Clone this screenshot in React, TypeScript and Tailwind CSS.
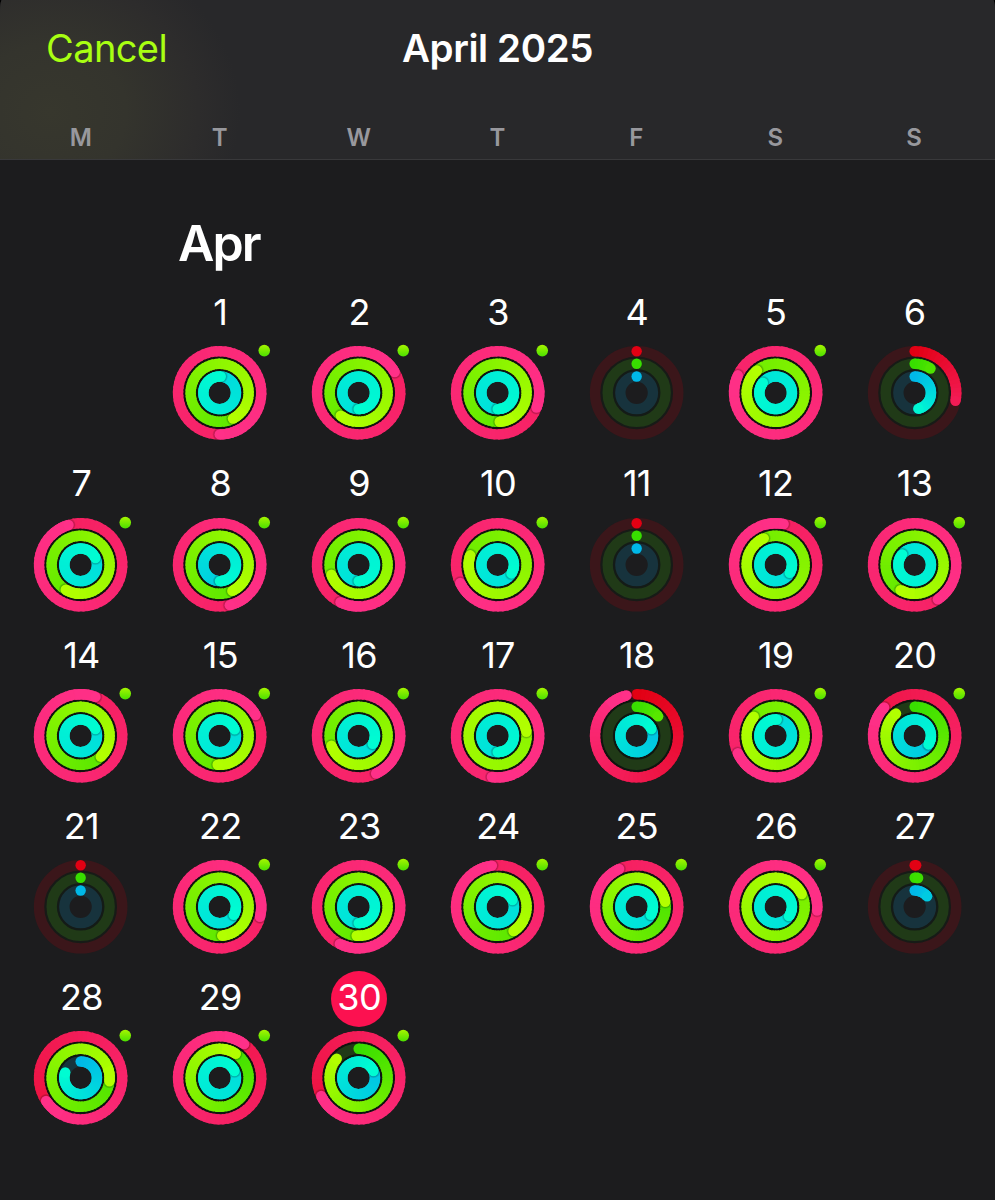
import React from 'react';

type Rings = [number, number, number];

type Day = {
  day: number;
  // move, exercise, stand (1 = goal reached)
  rings: Rings;
  workout?: boolean;
};

const weekdays = ['M', 'T', 'W', 'T', 'F', 'S', 'S'];

const days: Day[] = [
  { day: 1, rings: [3.5, 1.424, 2.011], workout: true },
  { day: 2, rings: [3.167, 1.606, 2.5], workout: true },
  { day: 3, rings: [3.308, 1.489, 2.5], workout: true },
  { day: 4, rings: [0, 0, 0] },
  { day: 5, rings: [3.819, 1.889, 2.856], workout: true },
  { day: 6, rings: [0.281, 0.092, 0.464] },
  { day: 7, rings: [2.953, 1.586, 2.181], workout: true },
  { day: 8, rings: [3.461, 1.428, 1.497], workout: true },
  { day: 9, rings: [3.572, 1.694, 2.5], workout: true },
  { day: 10, rings: [3.678, 1.803, 2.339], workout: true },
  { day: 11, rings: [0, 0, 0] },
  { day: 12, rings: [3.031, 1.933, 2.333], workout: true },
  { day: 13, rings: [3.406, 1.581, 2.861], workout: true },
  { day: 14, rings: [3.058, 1.378, 2.181], workout: true },
  { day: 15, rings: [3.167, 1.511, 2.186], workout: true },
  { day: 16, rings: [3.431, 1.694, 2.333], workout: true },
  { day: 17, rings: [4.522, 3.228, 2.5], workout: true },
  { day: 18, rings: [0.961, 0.133, 1.181] },
  { day: 19, rings: [3.681, 1.864, 2.011], workout: true },
  { day: 20, rings: [1.869, 0.889, 1.339], workout: true },
  { day: 21, rings: [0, 0, 0] },
  { day: 22, rings: [3.289, 1.486, 2.333], workout: true },
  { day: 23, rings: [3.575, 1.511, 2.5], workout: true },
  { day: 24, rings: [2.978, 1.408, 2.181], workout: true },
  { day: 25, rings: [2.931, 1.222, 2.333], workout: true },
  { day: 26, rings: [4.264, 2.178, 2.347], workout: true },
  { day: 27, rings: [0.006, 0.019, 0.139] },
  { day: 28, rings: [1.656, 1.269, 0.803], workout: true },
  { day: 29, rings: [2.1, 1.094, 2.181], workout: true },
  { day: 30, rings: [1.678, 0.864, 1.181], workout: true },
];

const today = 30;

const ringStyles = [
  { r: 41.6, from: [226, 0, 19], to: [255, 48, 136], track: '#3b161a' },
  { r: 29, from: [56, 222, 0], to: [178, 255, 0], track: '#203a17' },
  { r: 16.3, from: [0, 184, 232], to: [0, 252, 210], track: '#17333d' },
];

const WIDTH = 10.4;
const STEPS = 60;

function mix(from: number[], to: number[], t: number) {
  const c = from.map((v, i) => Math.round(v + (to[i] - v) * t));
  return `rgb(${c[0]},${c[1]},${c[2]})`;
}

function point(r: number, turn: number) {
  const a = turn * Math.PI * 2;
  return [r * Math.sin(a), -r * Math.cos(a)];
}

function arc(r: number, start: number, end: number) {
  const [x1, y1] = point(r, start);
  const [x2, y2] = point(r, end);
  return `M${x1.toFixed(3)} ${y1.toFixed(3)}A${r} ${r} 0 ${end - start > 0.5 ? 1 : 0} 1 ${x2.toFixed(3)} ${y2.toFixed(3)}`;
}

function Ring({ index, value }: { index: number; value: number }) {
  const { r, from, to, track } = ringStyles[index];
  const first = Math.max(0, value - 1);
  const span = value - first;
  const steps = Math.max(1, Math.ceil(span * STEPS));
  const overlap = 2 / (Math.PI * 2 * r);
  const [sx, sy] = point(r, first);
  const [ex, ey] = point(r, value);
  // short arcs never get as far as the end colour
  const scale = Math.max(value, 0.5);

  return (
    <g fill="none">
      {value < 1 && <circle r={r} stroke={track} strokeWidth={WIDTH} />}
      {value <= 1 && <circle cx={sx} cy={sy} r={WIDTH / 2} fill={mix(from, to, 0)} />}
      {value > 0 &&
        Array.from({ length: steps }, (_, i) => {
          const a = first + (span * i) / steps;
          const b = first + (span * (i + 1)) / steps;
          // each piece runs a little under the next one so no seam shows
          const end = Math.min(b + overlap, value);
          return (
            <path
              key={i}
              d={arc(r, a, end)}
              stroke={mix(from, to, (a + b) / 2 / scale)}
              strokeWidth={WIDTH}
            />
          );
        })}
      {value > 0.95 && (
        <g clipPath={`url(#ring-${index})`}>
          {[1.8, 1.2, 0.6].map((grow) => (
            <circle key={grow} cx={ex} cy={ey} r={WIDTH / 2 + grow} fill="#000" fillOpacity={0.09} />
          ))}
        </g>
      )}
      {value > 0.95 && (
        <path d={arc(r, value - 0.08, value)} stroke={mix(from, to, 0.98)} strokeWidth={WIDTH} />
      )}
      {value > 0 && <circle cx={ex} cy={ey} r={WIDTH / 2} fill={mix(from, to, value / scale)} />}
    </g>
  );
}

function ActivityRings({ rings, workout }: { rings: Rings; workout?: boolean }) {
  const empty = rings[0] < 0.95;
  return (
    <svg viewBox="-46.65 -46.8 93 93" className="mt-[4.8px] h-[93px] w-[93px] overflow-visible">
      <circle r="35.4" fill="none" stroke={empty ? '#171b17' : '#10140f'} strokeWidth="3" />
      <circle r="22.7" fill="none" stroke={empty ? '#141b17' : '#0e1610'} strokeWidth="3" />
      {rings.map((value, i) => (
        <Ring key={i} index={i} value={value} />
      ))}
      {workout && <circle cx="44.6" cy="-42.2" r="5.8" fill="url(#workout)" />}
    </svg>
  );
}

function DayCell({ day, rings, workout }: Day) {
  return (
    <div className={`flex h-[171.25px] flex-col items-center ${day === 1 ? 'col-start-2' : ''}`}>
      <div
        className={`ml-px flex h-[56px] w-[56px] items-center justify-center rounded-full pb-[3px] text-[36px] leading-none tracking-[-0.7px] ${day === today ? 'bg-[#fc1150]' : ''
          }`}
      >
        {day}
      </div>
      <ActivityRings rings={rings} workout={workout} />
    </div>
  );
}

export default function App() {
  return (
    <div className="h-[1200px] w-[995px] overflow-hidden bg-black font-['Inter',sans-serif] text-white">
      {/* shared by every day's svg */}
      <svg className="absolute h-0 w-0">
        <defs>
          <linearGradient id="workout" x1="0" y1="0" x2="0" y2="1">
            <stop offset="0" stopColor="#a6f500" />
            <stop offset="1" stopColor="#4be000" />
          </linearGradient>
          {ringStyles.map(({ r }, i) => (
            <clipPath key={i} id={`ring-${i}`}>
              <path
                clipRule="evenodd"
                d={`M0 ${-r - 5.2}a${r + 5.2} ${r + 5.2} 0 1 1 -0.01 0zM0 ${-r + 5.2}a${r - 5.2} ${r - 5.2} 0 1 1 -0.01 0z`}
              />
            </clipPath>
          ))}
        </defs>
      </svg>

      <div className="h-full bg-[#1c1c1e] [border-radius:2px_2px_0_0/14px_14px_0_0]">
        <header className="flex h-[160px] flex-col border-b border-[#39393b] bg-[#28282a] bg-[radial-gradient(ellipse_190px_170px_at_50px_112px,#37372d_0%,#34342d_40%,#2d2c2c_78%,#28282a_100%)] [border-radius:2px_2px_0_0/14px_14px_0_0]">
          <div className="grid h-[96px] grid-cols-[1fr_auto_1fr] items-center px-[46px]">
            <button className="justify-self-start text-[38px] leading-none tracking-[-0.6px] text-[#a8ff12]">Cancel</button>
            <h1 className="text-[38.5px] leading-none font-semibold tracking-[-0.4px]">April 2025</h1>
          </div>
          <div className="mt-[30px] grid grid-cols-7 px-[11.5px] text-center text-[24px] leading-[24px] font-semibold text-[#98989d]">
            {weekdays.map((name, i) => (
              <span key={i}>{name}</span>
            ))}
          </div>
        </header>

        <main className="px-[11.5px]">
          <div className="grid h-[125.7px] grid-cols-7 pt-[58px]">
            <h2 className="col-start-2 pr-[2px] text-center text-[50px] leading-[50px] font-semibold tracking-[-2px]">Apr</h2>
          </div>
          <div className="grid grid-cols-7">
            {days.map((d) => (
              <DayCell key={d.day} {...d} />
            ))}
          </div>
        </main>
      </div>
    </div>
  );
}
